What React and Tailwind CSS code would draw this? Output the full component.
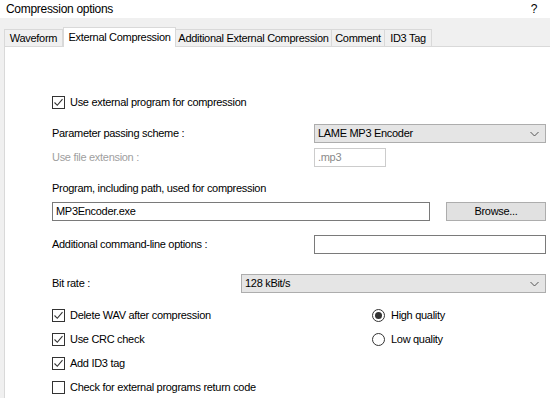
import React from 'react';

const CheckBox = ({ checked, label }) => (
    <div className="flex items-center h-[12px] gap-[5px]">
        <span className="w-[13px] h-[13px] border border-[#333] bg-white flex items-center justify-center shrink-0">
            {checked && (
                <svg width="11" height="11" viewBox="0 0 11 11">
                    <path d="M1.5 5.5 L4.3 8.3 L9.5 2.2" fill="none" stroke="#333" strokeWidth="1.1" />
                </svg>
            )}
        </span>
        <span className="whitespace-nowrap">{label}</span>
    </div>
);

const Radio = ({ checked, label }) => (
    <div className="flex items-center h-[12px] gap-[6px]">
        <span className="w-[13px] h-[13px] rounded-full border border-[#333] bg-white flex items-center justify-center shrink-0">
            {checked && <span className="w-[7px] h-[7px] rounded-full bg-[#333]" />}
        </span>
        <span>{label}</span>
    </div>
);

const Select = ({ value, className }) => (
    <div className={`h-[19px] bg-[#e5e5e5] border border-[#adadad] flex items-center justify-between pl-[3px] pr-[6px] ${className}`}>
        <span>{value}</span>
        <svg width="9" height="6" viewBox="0 0 9 6">
            <path d="M0.5 1 L4.5 5 L8.5 1" fill="none" stroke="#555" strokeWidth="1" />
        </svg>
    </div>
);

const tabs = [
    { name: 'Waveform', w: 'w-[59px]' },
    { name: 'External Compression', w: 'w-[113px]', active: true },
    { name: 'Additional External Compression', w: 'w-[157px]' },
    { name: 'Comment', w: 'w-[54px]' },
    { name: 'ID3 Tag', w: 'w-[48px]' },
];

export default function App() {
    return (
        <div className="w-[550px] h-[398px] overflow-hidden bg-white text-[11px] tracking-[-0.3px] text-black font-['Liberation_Sans',Arial,sans-serif] flex flex-col">
            {/* Title bar */}
            <div className="h-[18px] flex items-center justify-between pl-[6px] pr-[13px] text-[12px] tracking-[-0.3px] bg-white">
                <span>Compression options</span>
                <span>?</span>
            </div>

            <div className="flex-1 bg-[#f0f0f0] pt-[9px] pl-[4px] flex flex-col">
                {/* Tabs */}
                <div className="flex items-end h-[19px]">
                    {tabs.map((t) =>
                        t.active ? (
                            <div key={t.name} className={`${t.w} h-[20px] -mb-px z-10 bg-white border border-[#d9d9d9] border-b-0 flex items-center justify-center whitespace-nowrap`}>
                                {t.name}
                            </div>
                        ) : (
                            <div key={t.name} className={`${t.w} h-[17px] bg-[#f0f0f0] border border-[#d9d9d9] border-b-0 -ml-px first:ml-0 flex items-center justify-center whitespace-nowrap`}>
                                {t.name}
                            </div>
                        )
                    )}
                </div>

                {/* Panel */}
                <div className="flex-1 bg-white border-l border-t border-[#d9d9d9] pl-[47px] pt-[49px] flex flex-col">
                    <CheckBox checked label="Use external program for compression" />

                    <div className="flex items-center mt-[16px]">
                        <span className="w-[262px]">Parameter passing scheme :</span>
                        <Select value="LAME MP3 Encoder" className="w-[232px]" />
                    </div>

                    <div className="flex items-center mt-[5px]">
                        <span className="w-[262px] text-[#a0a0a0]">Use file extension :</span>
                        <div className="w-[72px] h-[19px] border border-[#cccccc] text-[#8a8a8a] flex items-center pl-[3px]">.mp3</div>
                    </div>

                    <div className="mt-[14px] h-[14px] flex items-center">Program, including path, used for compression</div>

                    <div className="flex items-center mt-[7px]">
                        <div className="w-[378px] h-[19px] border border-[#7a7a7a] flex items-center pl-[3px]">MP3Encoder.exe</div>
                        <div className="ml-[16px] w-[100px] h-[19px] bg-[#e1e1e1] border border-[#adadad] flex items-center justify-center">Browse...</div>
                    </div>

                    <div className="flex items-center mt-[14px]">
                        <span className="w-[262px]">Additional command-line options :</span>
                        <div className="w-[232px] h-[19px] border border-[#7a7a7a]" />
                    </div>

                    <div className="flex items-center mt-[20px]">
                        <span className="w-[189px]">Bit rate :</span>
                        <Select value="128 kBit/s" className="w-[305px]" />
                    </div>

                    <div className="flex mt-[16px]">
                        <div className="w-[320px] flex flex-col gap-[12px]">
                            <CheckBox checked label="Delete WAV after compression" />
                            <CheckBox checked label="Use CRC check" />
                            <CheckBox checked label="Add ID3 tag" />
                            <CheckBox label="Check for external programs return code" />
                        </div>
                        <div className="flex flex-col gap-[12px]">
                            <Radio checked label="High quality" />
                            <Radio label="Low quality" />
                        </div>
                    </div>
                </div>
            </div>
        </div>
    );
}
